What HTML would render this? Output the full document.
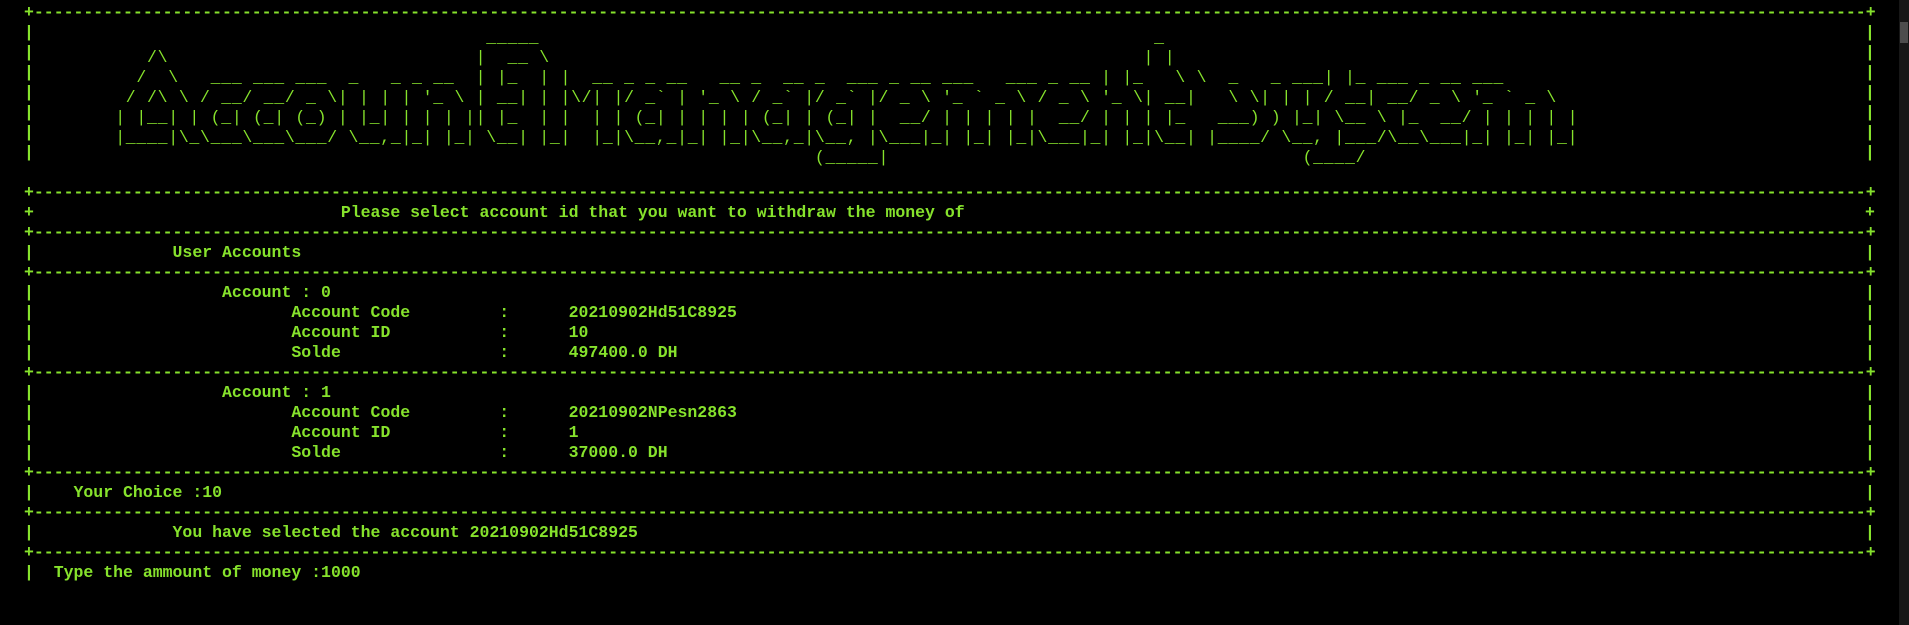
<!DOCTYPE html>
<html><head><meta charset="utf-8"><style>
html,body{margin:0;padding:0;background:#000;width:1909px;height:625px;overflow:hidden}
.l{position:absolute;margin:0;font-family:"Liberation Mono",monospace;font-size:16.5px;line-height:20px;color:#86e22c;white-space:pre;font-weight:bold}
.a{font-weight:normal;letter-spacing:0.7px}
#sb{position:absolute;left:1899px;top:0;width:10px;height:625px;background:#171717}
#th{position:absolute;left:1900px;top:22px;width:8px;height:21px;background:#4d4d4d}
</style></head><body>
<div id="sb"></div><div id="th"></div>
<pre class="l" style="left:24px;top:3px">+-----------------------------------------------------------------------------------------------------------------------------------------------------------------------------------------+
|
|
|
|
|
|
|

+-----------------------------------------------------------------------------------------------------------------------------------------------------------------------------------------+
+                               Please select account id that you want to withdraw the money of
+-----------------------------------------------------------------------------------------------------------------------------------------------------------------------------------------+
|              User Accounts
+-----------------------------------------------------------------------------------------------------------------------------------------------------------------------------------------+
|                   Account : 0
|                          Account Code         :      20210902Hd51C8925
|                          Account ID           :      10
|                          Solde                :      497400.0 DH
+-----------------------------------------------------------------------------------------------------------------------------------------------------------------------------------------+
|                   Account : 1
|                          Account Code         :      20210902NPesn2863
|                          Account ID           :      1
|                          Solde                :      37000.0 DH
+-----------------------------------------------------------------------------------------------------------------------------------------------------------------------------------------+
|    Your Choice :10
+-----------------------------------------------------------------------------------------------------------------------------------------------------------------------------------------+
|              You have selected the account 20210902Hd51C8925
+-----------------------------------------------------------------------------------------------------------------------------------------------------------------------------------------+
|  Type the ammount of money :1000</pre>
<pre class="l" style="left:1865px;top:23px">|
|
|
|
|
|
|


+

|

|
|
|
|

|
|
|
|

|

|</pre>
<pre class="l a" style="left:94px;top:28px">                                     _____                                                          _                        
     /\                             |  __ \                                                        | |                       
    /  \   ___ ___ ___  _   _ _ __  | |_  | |  __ _ _ __   __ _  __ _  ___ _ __ ___   ___ _ __ | |_   \ \  _   _ ___| |_ ___ _ __ ___  
   / /\ \ / __/ __/ _ \| | | | '_ \ | __| | |\/| |/ _` | '_ \ / _` |/ _` |/ _ \ '_ ` _ \ / _ \ '_ \| __|   \ \| | | / __| __/ _ \ '_ ` _ \ 
  | |__| | (_| (_| (_) | |_| | | | || |_  | |  | | (_| | | | | (_| | (_| |  __/ | | | | |  __/ | | | |_   ___) ) |_| \__ \ |_  __/ | | | | |
  |____|\_\___\___\___/ \__,_|_| |_| \__| |_|  |_|\__,_|_| |_|\__,_|\__, |\___|_| |_| |_|\___|_| |_|\__| |____/ \__, |___/\__\___|_| |_| |_|
                                                                    (_____|                                       (____/                       </pre>
</body></html>
